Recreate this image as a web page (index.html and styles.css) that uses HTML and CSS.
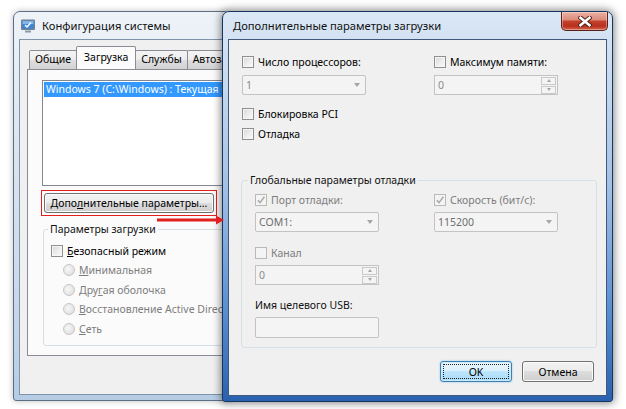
FILE: index.html
```html
<!DOCTYPE html>
<html lang="ru">
<head>
<meta charset="utf-8">
<title>Конфигурация системы</title>
<link rel="stylesheet" href="styles.css">
</head>
<body>
<div class="desk">
  <section class="win win-back">
    <header class="tbar">
      <svg class="appicon" width="16" height="16" viewBox="0 0 16 16">
        <rect x="1" y="1.5" width="14" height="10.5" rx="1" fill="#6f8196"/>
        <rect x="2.5" y="3" width="11" height="7.5" fill="#3d86d6"/>
        <rect x="2.5" y="3" width="11" height="3" fill="#7fb6ee"/>
        <path d="M5 7 L7 9 L11 4.5" stroke="#fff" stroke-width="1.4" fill="none"/>
        <rect x="5" y="12.5" width="6" height="2" fill="#8d99a8"/>
      </svg>
      <span class="ttl">Конфигурация системы</span>
    </header>
    <div class="client">
      <div class="tabs">
        <span class="tab first">Общие</span>
        <span class="tab sel">Загрузка</span>
        <span class="tab">Службы</span>
        <span class="tab">Автозагрузка</span>
      </div>
      <div class="tabpanel">
        <div class="listbox">
          <div class="lbitem">Windows 7 (C:\Windows) : Текущая ОС; Загружаемая по умолчанию ОС</div>
        </div>
        <div class="redbox"><button class="btn wide">Допо<u>л</u>нительные параметры...</button></div>
        <fieldset class="group gboot">
          <legend>Параметры загрузки</legend>
          <label class="row"><span class="cb"></span><span><u>Б</u>езопасный режим</span></label>
          <label class="row sub dis"><span class="rb"></span><span><u>М</u>инимальная</span></label>
          <label class="row sub dis"><span class="rb"></span><span>Дру<u>г</u>ая оболочка</span></label>
          <label class="row sub dis"><span class="rb"></span><span><u>В</u>осстановление Active Directory</span></label>
          <label class="row sub dis"><span class="rb"></span><span><u>С</u>еть</span></label>
        </fieldset>
      </div>
    </div>
  </section>

  <svg class="arrow" width="67" height="10" viewBox="0 0 67 10">
    <rect x="0" y="3.5" width="61" height="3" fill="#e31e1e"/>
    <polygon points="59,0.5 67,5 59,9.5" fill="#e31e1e"/>
  </svg>

  <section class="win win-front">
    <header class="tbar">
      <span class="ttl">Дополнительные параметры загрузки</span>
      <span class="close">
        <svg width="14" height="11" viewBox="0 0 14 11">
          <path d="M2.5 1.8 L11.5 9.2 M11.5 1.8 L2.5 9.2" stroke="#4a1a12" stroke-width="4.4" stroke-linecap="square"/>
          <path d="M2.5 1.8 L11.5 9.2 M11.5 1.8 L2.5 9.2" stroke="#fff" stroke-width="2.6" stroke-linecap="square"/>
        </svg>
      </span>
    </header>
    <div class="client">
      <div class="cols top">
        <div class="col">
          <label class="row"><span class="cb"></span><span>Число процессоров:</span></label>
          <div class="combo"><span>1</span><i class="dd"></i></div>
        </div>
        <div class="col">
          <label class="row"><span class="cb"></span><span>Максимум памяти:</span></label>
          <div class="spin"><span>0</span><span class="spinbtns"><i class="sb up"></i><i class="sb down"></i></span></div>
        </div>
      </div>
      <label class="row pci"><span class="cb"></span><span>Блокировка PCI</span></label>
      <label class="row dbg"><span class="cb"></span><span>Отладка</span></label>
      <fieldset class="group gdbg">
        <legend>Глобальные параметры отладки</legend>
        <div class="cols inner">
          <div class="col">
            <label class="row dis"><span class="cb checked"><svg width="10" height="10" viewBox="0 0 10 10"><path d="M1.8 5.2 L4 7.6 L8.4 1.8" stroke="#a9a9a9" stroke-width="1.5" fill="none"/></svg></span><span>Порт отладки:</span></label>
            <div class="combo"><span class="val2">COM1:</span><i class="dd"></i></div>
          </div>
          <div class="col">
            <label class="row dis"><span class="cb checked"><svg width="10" height="10" viewBox="0 0 10 10"><path d="M1.8 5.2 L4 7.6 L8.4 1.8" stroke="#a9a9a9" stroke-width="1.5" fill="none"/></svg></span><span>Скорость (бит/с):</span></label>
            <div class="combo"><span class="val2">115200</span><i class="dd"></i></div>
          </div>
        </div>
        <label class="row dis chan"><span class="cb"></span><span>Канал</span></label>
        <div class="spin narrow"><span>0</span><span class="spinbtns"><i class="sb up"></i><i class="sb down"></i></span></div>
        <div class="row usb">Имя целевого USB:</div>
        <div class="textbox"></div>
      </fieldset>
      <div class="actions">
        <button class="btn def">OK</button>
        <button class="btn">Отмена</button>
      </div>
    </div>
  </section>
</div>
</body>
</html>
```

FILE: styles.css
```css
* { box-sizing: border-box; }
html, body { margin: 0; padding: 0; }
body {
  background: #fff;
  width: 626px;
  height: 409px;
  overflow: hidden;
  font-family: "Noto Sans", "Open Sans", sans-serif;
  font-size: 10.5px;
  color: #000;
}
.desk { position: relative; width: 626px; height: 409px; }

/* windows */
.win {
  position: absolute;
  display: flex;
  flex-direction: column;
  border: 1px solid;
  border-radius: 7px 7px 3px 3px;
  padding: 0 5px 5px;
}
.win-back {
  left: 13px; top: 11px; width: 218px; height: 390px;
  border-color: #5d6f85;
  background: linear-gradient(180deg, #eef3f8 0%, #dfe8f2 25%, #cbdaea 70%, #b6cce4 100%);
  box-shadow: 0 0 6px rgba(0,0,0,.25);
  z-index: 1;
}
.win-front {
  left: 222px; top: 11px; width: 391px; height: 391px;
  border-color: #17365f;
  background: linear-gradient(180deg, #dbe7f5 0%, #c6d9ef 18%, #a2c0e5 45%, #5d92d2 75%, #2961b0 100%);
  box-shadow: 0 0 9px 1px rgba(0,0,0,.5);
  z-index: 3;
}
.tbar { height: 27px; flex: none; display: flex; align-items: center; color: #111; font-size: 11.2px; white-space: nowrap; }
.win-back .tbar { padding-left: 1px; gap: 6px; }
.win-front .tbar { padding-left: 5px; }
.appicon { flex: none; }
.close {
  margin-left: auto;
  margin-right: -1px;
  align-self: flex-start;
  width: 47px; height: 19px;
  border: 1px solid #5b2018;
  border-top: none;
  border-radius: 0 0 5px 5px;
  background: linear-gradient(180deg, #ebb0a2 0%, #dc8d7b 42%, #c4432d 52%, #b7301d 78%, #d6644c 100%);
  box-shadow: inset 0 0 0 1px rgba(255,255,255,.35);
  display: flex; align-items: center; justify-content: center;
}

.client { flex: 1; background: #f0f0f0; border: 1px solid; position: relative; min-width: 0; }
.win-back .client { border-color: #7f93aa; padding: 6px 0 0 7px; overflow: hidden; }
.win-front .client { border-color: #41587a; padding: 14px 12px 0 13px; }

/* tabs */
.tabs { display: flex; align-items: flex-end; height: 23px; padding-left: 2px; white-space: nowrap; overflow: hidden; }
.tab {
  flex: none;
  height: 19px; line-height: 17px;
  padding: 0 5px;
  border: 1px solid #898c95; border-bottom: none;
  margin-left: -1px;
  border-radius: 2px 2px 0 0;
  background: linear-gradient(180deg, #f4f4f4 0%, #ececec 50%, #dedede 51%, #d2d2d2 100%);
}
.tab.first { margin-left: 0; }
.tab.sel {
  position: relative;
  height: 24px; line-height: 20px;
  padding: 0 7px;
  margin-bottom: -1px;
  background: #fbfbfb;
  z-index: 1;
}
.tab.sel::after {
  content: "";
  position: absolute;
  left: 7px; right: 6px; top: 22px; height: 3px;
  background: #e31e1e;
}
.tabpanel {
  width: 210px;
  border: 1px solid #898c95;
  background: #fbfbfb;
  padding: 10px 0 9px 14px;
  display: flex; flex-direction: column; align-items: flex-start;
  overflow: hidden;
}
.listbox { width: 190px; height: 106px; border: 1px solid #828790; background: #fff; padding: 1px; overflow: hidden; }
.lbitem { height: 15px; line-height: 15px; background: #3399ff; color: #fff; padding-left: 2px; white-space: nowrap; overflow: hidden; }
.redbox { margin: 4px 0 0 -1px; border: 1px solid #e31e1e; padding: 2px; display: flex; }

/* buttons */
.btn {
  font: inherit; color: #000;
  height: 21px; padding: 0;
  border: 1px solid #707070; border-radius: 3px;
  background: linear-gradient(180deg, #f2f2f2 0%, #ebebeb 49%, #dddddd 50%, #cfcfcf 100%);
  box-shadow: inset 0 0 0 1px #fbfbfb;
}
.btn.wide { width: 170px; height: 20px; }
.btn.def {
  border-color: #3c7fb1;
  background: linear-gradient(180deg, #eaf6fd 0%, #d9f0fc 49%, #bee6fd 50%, #a7d9f5 100%);
  box-shadow: inset 0 0 0 1px #cdeafb, 0 0 2px #7cc3f0;
  outline: 1px dotted #222; outline-offset: -4px;
}
.actions { display: flex; justify-content: flex-end; gap: 10px; margin-top: 13px; }
.actions .btn { width: 72px; }

/* groups */
.group { border: 1px solid #d5dfe5; border-radius: 3px; min-width: 0; margin: 0; }
.group legend { padding: 0 2px; line-height: 15px; color: #111; }
.gboot { width: 190px; margin: 6px 0 0 1px; padding: 4px 0 6px 7px; overflow: hidden; }
.gboot legend { margin-left: -3px; }
.gdbg { width: 356px; margin: 31px 0 0 -1px; padding: 4px 0 9px 13px; }
.gdbg legend { margin-left: -7px; }

.row { display: flex; align-items: center; gap: 4px; white-space: nowrap; }
.gboot .row { height: 19.5px; }
.gboot .row.sub { padding-left: 12px; }
.win-front .row { height: 16px; }
.dis { color: #7d7d7d; }
.pci { margin-top: 11px; }
.dbg { margin-top: 4px; }
.chan { margin-top: 13px; }
.usb { margin-top: 12px; color: #111; }

.cb {
  width: 12px; height: 12px; flex: none;
  border: 1px solid #8e8f8f;
  background: linear-gradient(135deg, #d3d5d9 0%, #eeeeee 55%, #f9f9f9 100%);
  box-shadow: inset 0 0 0 1px #f6f6f6;
  display: flex; align-items: center; justify-content: center;
}
.dis .cb { border-color: #b9b9b9; background: #f4f4f4; box-shadow: none; }
.rb {
  width: 12px; height: 12px; flex: none; border-radius: 50%;
  border: 1px solid #c6c6c6;
  background: radial-gradient(circle at 40% 40%, #f7f7f7 0%, #e6e6e6 60%, #dadada 100%);
}

/* fields */
.cols { display: grid; grid-template-columns: 124px 124px; }
.cols.top { column-gap: 68px; }
.cols.inner { column-gap: 55px; }
.col { display: flex; flex-direction: column; gap: 4px; }
.cols.top .col { gap: 5px; }
.combo {
  height: 20px;
  border: 1px solid #c3c3c3; border-radius: 2px;
  background: #f4f4f4;
  color: #8b8b8b;
  display: flex; align-items: center;
  padding: 0 5px 0 3px;
}
.combo .val2 { color: #6f6f6f; }
.dd {
  margin-left: auto;
  width: 0; height: 0;
  border-left: 3.5px solid transparent;
  border-right: 3.5px solid transparent;
  border-top: 4px solid #a6a6a6;
}
.spin {
  width: 124px; height: 20px;
  border: 1px solid #c3c3c3;
  background: #f4f4f4;
  color: #8b8b8b;
  display: flex; align-items: center;
  padding: 0 1px 0 3px;
}
.spin.narrow { margin-top: 4px; }
.spinbtns { margin-left: auto; display: flex; flex-direction: column; gap: 1px; }
.sb {
  width: 15px; height: 8px;
  border: 1px solid #c9c9c9;
  background: #f4f4f4;
  display: flex; align-items: center; justify-content: center;
}
.sb::after { content: ""; width: 0; height: 0; border-left: 2.5px solid transparent; border-right: 2.5px solid transparent; }
.sb.up::after { border-bottom: 3px solid #a6a6a6; }
.sb.down::after { border-top: 3px solid #a6a6a6; }
.textbox {
  width: 124px; height: 21px; margin-top: 4px;
  border: 1px solid #c3c3c3; border-radius: 2px;
  background: #f4f4f4;
}

.arrow { position: absolute; left: 157px; top: 215px; z-index: 4; }
```
